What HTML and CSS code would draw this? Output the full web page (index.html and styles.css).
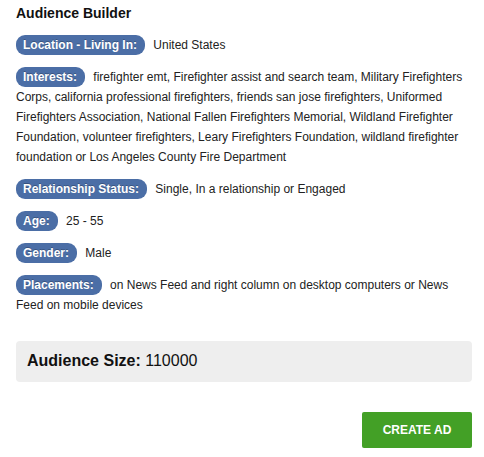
FILE: index.html
```html
<!DOCTYPE html>
<html>
<head>
<meta charset="utf-8">
<link rel="stylesheet" href="styles.css">
</head>
<body>
<div class="builder">
  <h1 class="title">Audience Builder</h1>
  <p class="row"><span class="tag">Location - Living In:</span> United States</p>
  <p class="row"><span class="tag">Interests:</span> firefighter emt, Firefighter assist and search team, Military Firefighters Corps, california professional firefighters, friends san jose firefighters, Uniformed Firefighters Association, National Fallen Firefighters Memorial, Wildland Firefighter Foundation, volunteer firefighters, Leary Firefighters Foundation, wildland firefighter foundation or Los Angeles County Fire Department</p>
  <p class="row"><span class="tag">Relationship Status:</span> Single, In a relationship or Engaged</p>
  <p class="row"><span class="tag">Age:</span> 25 - 55</p>
  <p class="row"><span class="tag">Gender:</span> Male</p>
  <p class="row"><span class="tag">Placements:</span> on News Feed and right column on desktop computers or News Feed on mobile devices</p>
  <div class="size"><strong>Audience Size:</strong> 110000</div>
  <div class="actions"><button class="create">CREATE AD</button></div>
</div>
</body>
</html>
```

FILE: styles.css
```css
html, body {
  margin: 0;
  padding: 0;
  background: #fff;
}
body {
  font-family: "Liberation Sans", Arial, sans-serif;
  color: #222;
  font-size: 12px;
}
.builder {
  padding: 3px 12px 0 16px;
}
.title {
  font-size: 14px;
  font-weight: bold;
  line-height: 20px;
  margin: 0 0 12px 0;
  color: #111;
}
.row {
  margin: 0 0 12px 0;
  line-height: 20px;
}
.tag {
  display: inline-block;
  background: #4b6ea6;
  color: #fff;
  font-weight: bold;
  line-height: 14px;
  padding: 3px 8px 3px 7px;
  border-radius: 9px;
  margin-right: 5px;
  text-shadow: 0 -1px 0 rgba(0,0,0,0.25);
  vertical-align: top;
}
.size {
  margin-top: 26px;
  background: #eeeeee;
  border-radius: 4px;
  height: 41px;
  line-height: 40px;
  padding: 0 11px;
  font-size: 16px;
  color: #111;
}
.actions {
  display: flex;
  justify-content: flex-end;
  margin-top: 30px;
}
.create {
  background: #43a026;
  color: #fff;
  border: none;
  border-radius: 2px;
  width: 110px;
  height: 36px;
  font-family: "Liberation Sans", Arial, sans-serif;
  font-weight: bold;
  font-size: 12px;
  padding: 0;
}
```
